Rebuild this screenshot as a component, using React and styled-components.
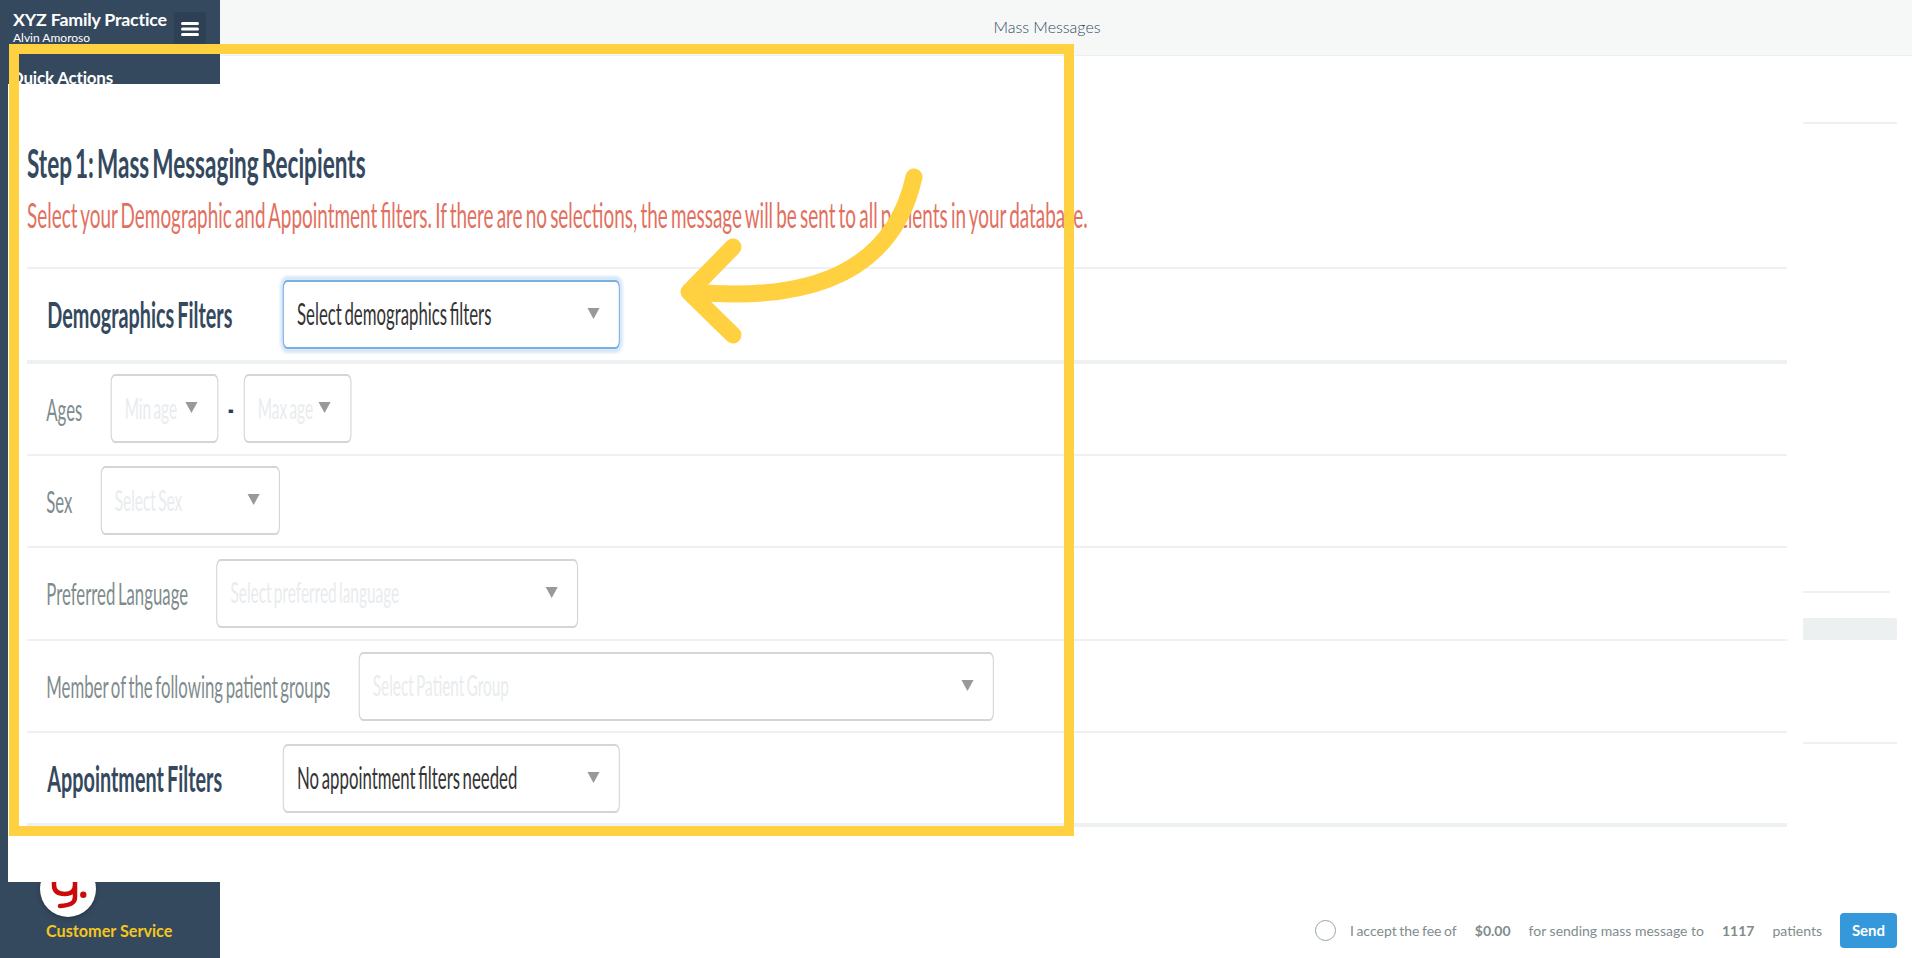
import React from 'react'
import styled, { createGlobalStyle } from 'styled-components'

const GlobalStyle = createGlobalStyle`
    html, body {
        margin: 0;
        height: 100%;
        overflow: hidden;
        background: #fff;
        font-family: "Lato", "Open Sans", sans-serif;
    }
    * { box-sizing: border-box; }
`

const Page = styled.div`
    position: relative;
    display: flex;
    width: 1912px;
    height: 958px;
    overflow: hidden;
`

const Sidebar = styled.aside`
    width: 220px;
    flex-shrink: 0;
    display: flex;
    flex-direction: column;
    background: #35495e;
    color: #fff;
`

const Brand = styled.div`
    display: flex;
    justify-content: space-between;
    padding: 8px 14px 0 13px;
    height: 68px;
`

const BrandName = styled.div`
    font-size: 17.8px;
    font-weight: 700;
    line-height: 22px;
    letter-spacing: -0.2px;
`

const UserName = styled.div`
    font-size: 12px;
    line-height: 14px;
    margin-top: 1px;
`

const MenuButton = styled.button`
    width: 32px;
    height: 34px;
    margin-top: 4px;
    border: 0;
    border-radius: 2px;
    background: #2e4053;
    color: #fff;
    padding: 0;
    display: flex;
    align-items: center;
    justify-content: center;
`

const SectionTitle = styled.div`
    font-size: 17px;
    font-weight: 700;
    line-height: 20px;
    padding-left: 10px;
    letter-spacing: -0.2px;
`

const Support = styled.div`
    margin-top: auto;
    display: flex;
    flex-direction: column;
    align-items: center;
    padding-bottom: 18px;
    width: 136px;
`

const LogoCircle = styled.div`
    width: 56px;
    height: 56px;
    border-radius: 50%;
    background: #fff;
    box-shadow: 0 2px 5px rgba(0, 0, 0, 0.25);
    display: flex;
    align-items: center;
    justify-content: center;
`

const SupportLabel = styled.div`
    margin-top: 5px;
    white-space: nowrap;
    font-size: 16.2px;
    font-weight: 700;
    line-height: 18px;
    color: #f6c61c;
    align-self: flex-start;
    margin-left: 46px;
`

const Main = styled.div`
    flex: 1;
    display: flex;
    flex-direction: column;
    min-width: 0;
`

const TopBar = styled.header`
    height: 56px;
    padding: 0 38px 2px 0;
    background: #f6f8f8;
    border-bottom: 1px solid #ecf0f1;
    display: flex;
    align-items: center;
    justify-content: center;
    font-size: 16px;
    font-weight: 300;
    color: #34495e;
`

const Footer = styled.footer`
    margin-top: auto;
    height: 42px;
    margin-bottom: 7px;
    padding-right: 15px;
    display: flex;
    align-items: center;
    justify-content: flex-end;
    font-size: 14px;
    color: #7f8c8d;
`

const Radio = styled.span`
    width: 21px;
    height: 21px;
    border-radius: 50%;
    border: 1px solid #95a5a6;
    margin-right: 14px;
`

const FeeText = styled.span`
    margin-right: 18px;
    white-space: nowrap;
    font-weight: ${props => props.$strong ? 700 : 400};
    word-spacing: ${props => props.$tight ? -1 : 0}px;
`

const SendButton = styled.button`
    width: 57px;
    height: 35px;
    border: 0;
    border-radius: 4px;
    background: #3498db;
    color: #fff;
    font-family: inherit;
    font-size: 15px;
    font-weight: 700;
`

// the zoomed panel that sits over the page
const Panel = styled.section`
    position: absolute;
    left: 8px;
    top: 84px;
    right: 0;
    height: 798px;
    background: #fff;
    display: flex;
    padding-left: 19px;
`

const FormSlot = styled.div`
    width: 1760px;
    flex-shrink: 0;
`

// the form is stretched tall in the picture, so it is laid out wide and squeezed
const Form = styled.div`
    width: 3200px;
    transform: scaleX(0.55);
    transform-origin: left top;
    word-spacing: -3px;
`

const Heading = styled.h2`
    margin: 59px 0 0;
    font-size: 41px;
    line-height: 40px;
    font-weight: 700;
    color: #34495e;
    word-spacing: -4.5px;
`

const Note = styled.p`
    margin: 14px 0 0;
    height: 70px;
    font-size: 34.4px;
    line-height: 36px;
    color: #e2705f;
`

const Row = styled.div`
    display: flex;
    align-items: center;
    height: ${props => props.$thick ? 94 : 92.6}px;
    padding-left: 35px;
    border-top: ${props => props.$thick ? 4 : 2}px solid #eef1f2;
    &:last-child {
        height: 96px;
        border-bottom: 4px solid #eef1f2;
    }
`

const Label = styled.div`
    flex-shrink: 0;
    width: ${props => props.$width ? props.$width + 'px' : 'auto'};
    margin-right: ${props => props.$width ? 0 : 51}px;
    padding-left: ${props => props.$strong ? 2 : 0}px;
    font-size: ${props => props.$strong ? 36 : 30.5}px;
    font-weight: ${props => props.$strong ? 700 : 400};
    color: ${props => props.$strong ? '#34495e' : '#7f8c8d'};
    white-space: nowrap;
`

const Select = styled.div`
    position: relative;
    flex-shrink: 0;
    width: ${props => props.$width}px;
    height: 69px;
    padding: 0 24px 2px;
    display: flex;
    align-items: center;
    background: #fff;
    border: 2px solid ${props => props.$focused ? '#79b0e4' : '#d3d6d6'};
    border-radius: 8px;
    box-shadow: ${props => props.$focused ? '0 0 4px 4px #d8e8f7' : 'none'};
    font-size: ${props => props.$muted ? 28 : 30.5}px;
    white-space: nowrap;
    color: ${props => props.$muted ? '#e8ecee' : '#333'};
`

const Caret = styled.span`
    position: absolute;
    right: ${props => props.$right || 35}px;
    top: 26px;
    width: 0;
    height: 0;
    border-left: 11px solid transparent;
    border-right: 11px solid transparent;
    border-top: 11px solid #999;
`

const Dash = styled.span`
    width: 46px;
    flex-shrink: 0;
    text-align: center;
    font-size: 30px;
    font-weight: 900;
    color: #2c3e50;
`

const Rail = styled.div`
    width: 94px;
    margin-left: 16px;
    flex-shrink: 0;
`

const RailLine = styled.div`
    height: 2px;
    width: ${props => props.$width || 94}px;
    margin-top: ${props => props.$top}px;
    background: #eef0f1;
`

const RailBox = styled.div`
    height: 22px;
    margin-top: 25px;
    background: #ecf0f1;
    border-radius: 0 2px 2px 0;
`

// annotation drawn on top of the screenshot
const Frame = styled.div`
    position: absolute;
    left: 9px;
    top: 44px;
    width: 1065px;
    height: 792px;
    border: 10px solid #ffd040;
    pointer-events: none;
`

const ArrowMark = styled.svg`
    position: absolute;
    left: 670px;
    top: 160px;
    pointer-events: none;
`

const AppSelect = ({ width, text, muted, focused, caret }) => (
    <Select $width={width} $muted={muted} $focused={focused}>
        {text}
        <Caret $right={caret} />
    </Select>
)

export default function App() {
    return (
        <Page>
            <GlobalStyle />
            <Sidebar>
                <Brand>
                    <div>
                        <BrandName>XYZ Family Practice</BrandName>
                        <UserName>Alvin Amoroso</UserName>
                    </div>
                    <MenuButton aria-label="Menu">
                        <svg width="18" height="14" viewBox="0 0 18 14">
                            <rect x="0" y="0" width="18" height="3" rx="1.5" fill="#fff" />
                            <rect x="0" y="5.5" width="18" height="3" rx="1.5" fill="#fff" />
                            <rect x="0" y="11" width="18" height="3" rx="1.5" fill="#fff" />
                        </svg>
                    </MenuButton>
                </Brand>
                <SectionTitle>Quick Actions</SectionTitle>
                <Support>
                    <LogoCircle>
                        <svg width="56" height="56" viewBox="0 0 56 56">
                            <path d="M14 12 V24 C14 31 19 33 25 33 C31 33 35 30 35 24 V12 M35 24 V36 C35 42 31 44 20 45" fill="none" stroke="#cc0a0a" strokeWidth="4.5" strokeLinecap="round" />
                            <circle cx="43.3" cy="33.7" r="3.2" fill="#cc0a0a" />
                        </svg>
                    </LogoCircle>
                    <SupportLabel>Customer Service</SupportLabel>
                </Support>
            </Sidebar>
            <Main>
                <TopBar>Mass Messages</TopBar>
                <Footer>
                    <Radio />
                    <FeeText $tight>I accept the fee of</FeeText>
                    <FeeText $strong>$0.00</FeeText>
                    <FeeText>for sending mass message to</FeeText>
                    <FeeText $strong>1117</FeeText>
                    <FeeText>patients</FeeText>
                    <SendButton>Send</SendButton>
                </Footer>
            </Main>
            <Panel>
                <FormSlot>
                    <Form>
                        <Heading>Step 1: Mass Messaging Recipients</Heading>
                        <Note>Select your Demographic and Appointment filters. If there are no selections, the message will be sent to all patients in your database.</Note>
                        <Row>
                            <Label $strong $width={430}>Demographics Filters</Label>
                            <AppSelect width={613} text="Select demographics filters" focused />
                        </Row>
                        <Row $thick>
                            <Label>Ages</Label>
                            <AppSelect width={196} text="Min age" muted caret={36} />
                            <Dash>-</Dash>
                            <AppSelect width={196} text="Max age" muted caret={36} />
                        </Row>
                        <Row>
                            <Label>Sex</Label>
                            <AppSelect width={326} text="Select Sex" muted />
                        </Row>
                        <Row>
                            <Label>Preferred Language</Label>
                            <AppSelect width={658} text="Select preferred language" muted />
                        </Row>
                        <Row>
                            <Label>Member of the following patient groups</Label>
                            <AppSelect width={1155} text="Select Patient Group" muted />
                        </Row>
                        <Row>
                            <Label $strong $width={430}>Appointment Filters</Label>
                            <AppSelect width={613} text="No appointment filters needed" />
                        </Row>
                    </Form>
                </FormSlot>
                <Rail>
                    <RailLine $top={38} />
                    <RailLine $top={467} $width={87} />
                    <RailBox />
                    <RailLine $top={102} />
                </Rail>
            </Panel>
            <Frame />
            <ArrowMark width="260" height="190" viewBox="670 160 260 190">
                <path d="M914 177 C895 262 825 304 692 292" fill="none" stroke="#ffd040" strokeWidth="17" strokeLinecap="round" />
                <path d="M733 247 L689 292 L733 335" fill="none" stroke="#ffd040" strokeWidth="17" strokeLinecap="round" strokeLinejoin="round" />
            </ArrowMark>
        </Page>
    )
}
